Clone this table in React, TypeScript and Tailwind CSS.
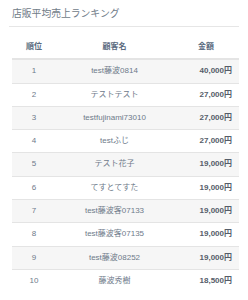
import React from "react";

const rows = [
  ["1", "test藤波0814", "40,000円"],
  ["2", "テストテスト", "27,000円"],
  ["3", "testfujinami73010", "27,000円"],
  ["4", "testふじ", "27,000円"],
  ["5", "テスト花子", "19,000円"],
  ["6", "てすとてすた", "19,000円"],
  ["7", "test藤波客07133", "19,000円"],
  ["8", "test藤波客07135", "19,000円"],
  ["9", "test藤波08252", "19,000円"],
  ["10", "藤波秀樹", "18,500円"],
];

export default function App() {
  return (
    <div
      className="w-[248px] h-[300px] bg-white px-[9px] pt-[7px]"
      style={{ fontFamily: '"Liberation Sans", "Noto Sans CJK JP", sans-serif' }}
    >
      <div className="border-b border-[#e6e6e6] pb-[5px] pl-[3px] text-[9.8px] leading-[14px] text-[#707b88]">
        店販平均売上ランキング
      </div>
      <table className="mx-[3px] mt-[9px] w-[227px] table-fixed border-collapse text-[8px] leading-[14.29px]">
        <colgroup>
          <col className="w-[44px]" />
          <col className="w-[117px]" />
          <col className="w-[66px]" />
        </colgroup>
        <thead>
          <tr className="border-b-2 border-[#e4e4e4]">
            <th className="py-[4px] text-center font-bold text-[#5b6b80]">順位</th>
            <th className="py-[4px] text-center font-bold text-[#5b6b80]">顧客名</th>
            <th className="py-[4px] text-center font-bold text-[#5b6b80]">金額</th>
          </tr>
        </thead>
        <tbody>
          {rows.map((r, i) => (
            <tr
              key={i}
              className={`border-t border-[#e4e4e4] first:border-t-0 ${i % 2 === 0 ? "bg-[#f6f6f6]" : "bg-white"}`}
            >
              <td className="py-[4px] text-center text-[#6e7a8a]">{r[0]}</td>
              <td className="py-[4px] text-center text-[#6e7a8a] whitespace-nowrap">{r[1]}</td>
              <td className="py-[4px] pr-[7px] text-right font-bold text-[#555d69]">{r[2]}</td>
            </tr>
          ))}
        </tbody>
      </table>
    </div>
  );
}
